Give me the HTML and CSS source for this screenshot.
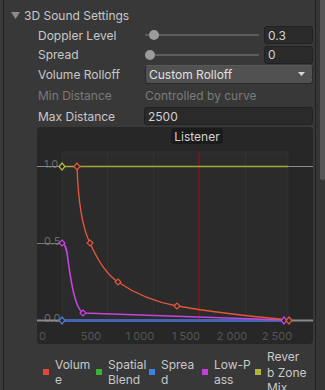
FILE: index.html
```html
<!DOCTYPE html>
<html>
<head>
<meta charset="utf-8">
<link rel="stylesheet" href="styles.css">
</head>
<body>
<div class="window">
  <div class="edge"></div>
  <div class="content">
    <div class="foldout">
      <svg class="fold-tri" width="9" height="7" viewBox="0 0 9 7"><polygon points="0,0 9,0 4.5,7" fill="#8c8c8c"/></svg>
      <span>3D Sound Settings</span>
    </div>
    <div class="row h20">
      <span class="label">Doppler Level</span>
      <div class="value slider-wrap">
        <div class="slider"><div class="track"></div><div class="knob" style="left:4px"></div></div>
        <div class="field small">0.3</div>
      </div>
    </div>
    <div class="row h19">
      <span class="label">Spread</span>
      <div class="value slider-wrap">
        <div class="slider"><div class="track"></div><div class="knob" style="left:0px"></div></div>
        <div class="field small">0</div>
      </div>
    </div>
    <div class="row h20">
      <span class="label">Volume Rolloff</span>
      <div class="value">
        <div class="dropdown"><span>Custom Rolloff</span>
          <svg width="7" height="4" viewBox="0 0 7 4"><polygon points="0,0 7,0 3.5,4" fill="#d8d8d8"/></svg>
        </div>
      </div>
    </div>
    <div class="row h22 disabled">
      <span class="label">Min Distance</span>
      <div class="value"><span class="plain">Controlled by curve</span></div>
    </div>
    <div class="row h20">
      <span class="label">Max Distance</span>
      <div class="value wide"><div class="field">2500</div></div>
    </div>

    <div class="curve">
      <svg class="chart" width="276" height="217" viewBox="0 0 276 217">
        <rect x="25" y="25" width="226" height="168" fill="#2b2b2b" stroke="#323232" stroke-width="1"/>
        <g stroke="#323232" stroke-width="1">
          <line x1="70.5" y1="25" x2="70.5" y2="193"/>
          <line x1="116.5" y1="25" x2="116.5" y2="193"/>
          <line x1="208.5" y1="25" x2="208.5" y2="193"/>
        </g>
        <line x1="162" y1="25" x2="162" y2="193" stroke="#6a1c1c" stroke-width="2"/>

        <g font-family="Inter, 'Noto Sans', sans-serif" font-size="11" fill="#6a6a6a">
          <text x="7" y="41">1.0</text>
          <text x="7" y="118">0.5</text>
          <text x="7" y="195">0.0</text>
        </g>
        <line x1="0" y1="39.5" x2="276" y2="39.5" stroke="#8a8a8a" stroke-width="1"/>
        <line x1="0" y1="116.5" x2="25" y2="116.5" stroke="#7a7a7a" stroke-width="1"/>
        <line x1="12" y1="116.5" x2="16" y2="116.5" stroke="#3b9a3b" stroke-width="1"/>
        <line x1="0" y1="193.5" x2="276" y2="193.5" stroke="#8a8a8a" stroke-width="2"/>

        <line x1="25" y1="39.5" x2="251" y2="39.5" stroke="#a6a632" stroke-width="1.5"/>
        <line x1="25" y1="193.5" x2="251" y2="193.5" stroke="#3f64c4" stroke-width="2.5"/>

        <path d="M25 116 C29 117, 30 124, 31 133 C34 155, 38 181, 46 186 L247 193" fill="none" stroke="#c245de" stroke-width="1.6"/>
        <path d="M40 39 C41 70, 45 100, 53 116 C60 132, 69 147, 81 155 C100 168, 118 175, 140 179 C180 186, 220 190, 252 193" fill="none" stroke="#e0563c" stroke-width="1.4"/>

        <g stroke-width="1.2" fill="#2a2a2a">
          <path d="M25 36 L28 39.5 L25 43 L22 39.5 Z" stroke="#b8b83a"/>
          <path d="M40 36 L43 39.5 L40 43 L37 39.5 Z" stroke="#e0563c"/>
          <path d="M25 113 L28 116 L25 119 L22 116 Z" stroke="#c245de"/>
          <path d="M53 113 L56 116 L53 119 L50 116 Z" stroke="#e0563c"/>
          <path d="M81 152 L84 155 L81 158 L78 155 Z" stroke="#e0563c"/>
          <path d="M140 176 L143 179 L140 182 L137 179 Z" stroke="#e0563c"/>
          <path d="M46 183 L49 186 L46 189 L43 186 Z" stroke="#c245de"/>
          <path d="M25 190 L28 193.5 L25 197 L22 193.5 Z" stroke="#4a7ae0"/>
          <path d="M247 190 L250 193.5 L247 197 L244 193.5 Z" stroke="#c245de"/>
          <path d="M252 190 L255 193.5 L252 197 L249 193.5 Z" stroke="#e0563c"/>
        </g>

        <g font-family="Inter, 'Noto Sans', sans-serif" font-size="11" fill="#555555">
          <text x="2" y="213">0</text>
          <text x="54" y="213" text-anchor="middle">500</text>
          <text x="103" y="213" text-anchor="middle">1 000</text>
          <text x="149" y="213" text-anchor="middle">1 500</text>
          <text x="195" y="213" text-anchor="middle">2 000</text>
          <text x="240" y="213" text-anchor="middle">2 500</text>
        </g>
      </svg>
      <div class="listener">Listener</div>
    </div>

    <div class="legend">
      <div class="item"><span class="sw red"></span><span class="lt">Volum<br>e</span></div>
      <div class="item"><span class="sw green"></span><span class="lt">Spatial<br>Blend</span></div>
      <div class="item"><span class="sw blue"></span><span class="lt">Sprea<br>d</span></div>
      <div class="item"><span class="sw purple"></span><span class="lt">Low-P<br>ass</span></div>
      <div class="item"><span class="sw yellow"></span><span class="lt">Rever<br>b Zone<br>Mix</span></div>
    </div>
  </div>
  <div class="scrollbar"><div class="sthumb"></div></div>
</div>
</body>
</html>
```
FILE: styles.css
```css
* { box-sizing: border-box; }
html, body {
  margin: 0;
  padding: 0;
  width: 325px;
  height: 390px;
  overflow: hidden;
  background: #383838;
}
.window {
  display: flex;
  width: 325px;
  height: 390px;
  overflow: hidden;
  font-family: Inter, "Noto Sans", sans-serif;
  font-size: 12px;
  color: #c8c8c8;
}
.edge {
  width: 4px;
  flex: none;
  background: #3a3a3a;
  border-right: 1px solid #1f1f1f;
}
.content {
  flex: 1;
  padding-top: 6px;
  display: flex;
  flex-direction: column;
  min-width: 0;
}
.content > * { flex: none; }
.foldout {
  height: 19px;
  display: flex;
  align-items: center;
  padding-left: 7px;
  gap: 4px;
}
.fold-tri { flex: none; }
.row {
  display: flex;
  align-items: center;
  padding-left: 34px;
  padding-right: 2px;
}
.h19 { height: 19px; }
.h20 { height: 20px; }
.h22 { height: 22px; }
.label {
  width: 107px;
  flex: none;
  white-space: nowrap;
}
.value {
  flex: 1;
  display: flex;
  align-items: center;
}
.value.wide { margin-left: -1px; }
.slider-wrap { gap: 5px; }
.slider {
  flex: 1;
  height: 18px;
  position: relative;
  display: flex;
  align-items: center;
}
.track {
  flex: 1;
  height: 2px;
  background: #5e5e5e;
  border-radius: 1px;
}
.knob {
  position: absolute;
  top: 4px;
  width: 10px;
  height: 10px;
  border-radius: 50%;
  background: #9c9c9c;
}
.field {
  flex: 1;
  height: 18px;
  background: #2a2a2a;
  border: 1px solid #212121;
  border-radius: 3px;
  padding-left: 3px;
  display: flex;
  align-items: center;
  color: #d2d2d2;
}
.field.small {
  flex: none;
  width: 49px;
}
.dropdown {
  flex: 1;
  height: 19px;
  background: #515151;
  border: 1px solid #2a2a2a;
  border-top-color: #5a5a5a;
  border-radius: 3px;
  display: flex;
  align-items: center;
  justify-content: space-between;
  padding-left: 3px;
  padding-right: 7px;
  color: #e0e0e0;
}
.disabled { color: #7a7a7a; }
.plain { color: #7a7a7a; }
.curve {
  position: relative;
  margin: 1px 2px 0 33px;
  width: 276px;
  height: 217px;
  background: #272727;
  border-radius: 4px;
  overflow: hidden;
}
.chart { display: block; }
.listener {
  position: absolute;
  left: 134px;
  top: 1px;
  width: 52px;
  height: 16px;
  background: #1b1b1b;
  border-radius: 3px;
  display: flex;
  align-items: center;
  justify-content: center;
  color: #d4d4d4;
  font-size: 12px;
}
.legend {
  display: flex;
  align-items: center;
  padding-left: 39px;
  margin-top: 5px;
}
.item {
  width: 53px;
  flex: none;
  display: flex;
  align-items: center;
  gap: 6px;
}
.sw {
  width: 6px;
  height: 6px;
  flex: none;
}
.red { background: #e0483a; }
.green { background: #3ab33a; }
.blue { background: #3c82e6; }
.purple { background: #c23ede; }
.yellow { background: #b4b43a; }
.lt {
  line-height: 15.5px;
  white-space: nowrap;
  font-size: 12px;
  color: #c8c8c8;
}
.scrollbar {
  width: 10px;
  flex: none;
  background: #353535;
  border-left: 1px solid #222222;
  padding-left: 4px;
}
.sthumb {
  width: 5px;
  height: 180px;
  background: #565656;
  border-radius: 0 0 3px 3px;
}
```
